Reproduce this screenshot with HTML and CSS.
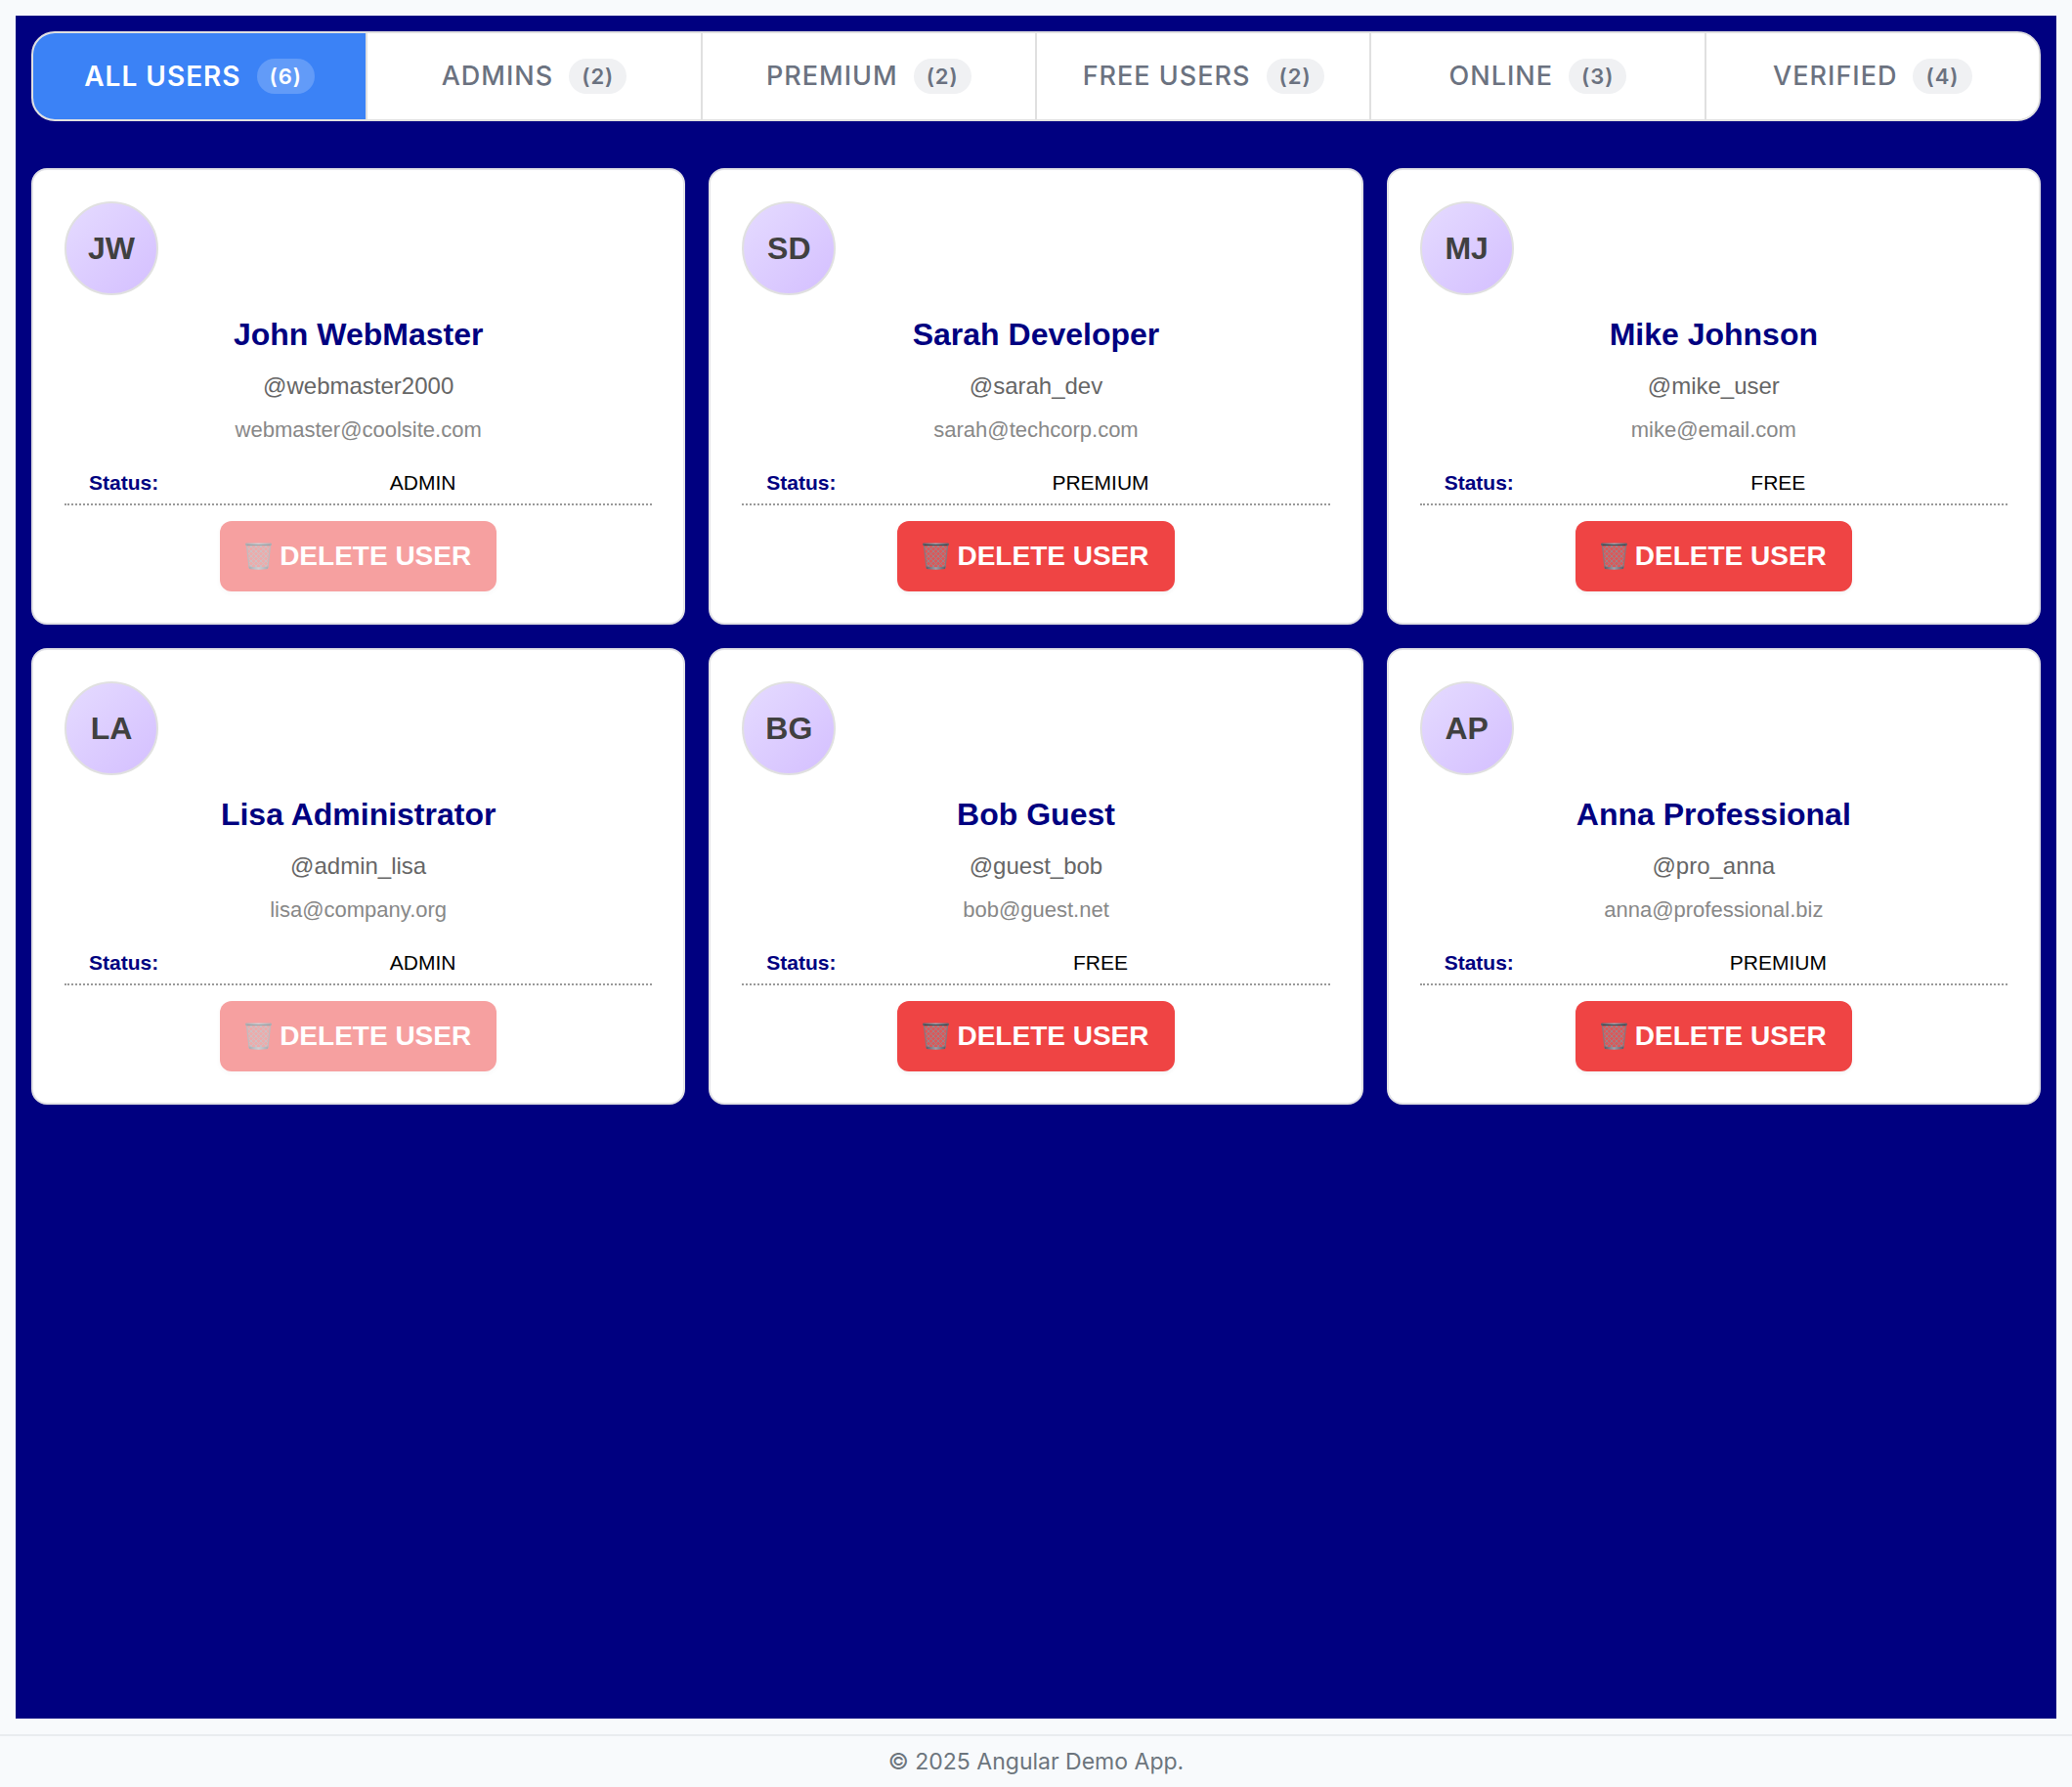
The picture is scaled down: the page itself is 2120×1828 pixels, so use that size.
FILE: index.html
```html
<!DOCTYPE html>
<html lang="en">
<head>
<meta charset="utf-8">
<meta name="viewport" content="width=device-width, initial-scale=1">
<title>Angular Demo App</title>
<link rel="stylesheet" href="styles.css">
</head>
<body>
<svg class="sprite" aria-hidden="true">
  <defs>
    <linearGradient id="metal" x1="0" x2="1" y1="0" y2="0">
      <stop offset="0" stop-color="#5a5d66"/>
      <stop offset="0.5" stop-color="#9aa1ab"/>
      <stop offset="1" stop-color="#5a5d66"/>
    </linearGradient>
    <clipPath id="basket"><path d="M1.500 3H25.500L23 26.500H4Z"/></clipPath>
  </defs>
  <symbol id="trash" viewBox="0 0 27 28">
    <path d="M1.500 3H25.500L23 26.500H4Z" fill="#a98a90" fill-opacity="0.3"/>
    <g clip-path="url(#basket)" stroke="#98878e" stroke-width="0.900" fill="none">
      <path d="M-20 3L4 27M-15 3L9 27M-10 3L14 27M-5 3L19 27M0 3L24 27M5 3L29 27M10 3L34 27M15 3L39 27M20 3L44 27"/>
      <path d="M47 3L23 27M42 3L18 27M37 3L13 27M32 3L8 27M27 3L3 27M22 3L-2 27M17 3L-7 27M12 3L-12 27M7 3L-17 27"/>
    </g>
    <path d="M1.500 3L4 26M25.500 3L23 26" stroke="#85797f" stroke-width="1.200" fill="none"/>
    <path d="M3.600 24.600Q13.500 26 23.400 24.600L23 27Q13.500 28.400 4 27Z" fill="url(#metal)"/>
    <rect x="0" y="0.500" width="27" height="2.800" rx="1.400" fill="url(#metal)"/>
    <path d="M1.500 2.600H25.500" stroke="#3c4046" stroke-width="1"/>
  </symbol>
</svg>
<main class="page">
  <nav class="tabs" aria-label="User filters">
    <button class="tab tab-active" type="button">ALL USERS <span class="count">(6)</span></button>
    <button class="tab" type="button">ADMINS <span class="count">(2)</span></button>
    <button class="tab" type="button">PREMIUM <span class="count">(2)</span></button>
    <button class="tab" type="button">FREE USERS <span class="count">(2)</span></button>
    <button class="tab" type="button">ONLINE <span class="count">(3)</span></button>
    <button class="tab" type="button">VERIFIED <span class="count">(4)</span></button>
  </nav>
  <section class="cards" aria-label="Users">
    <article class="card">
      <div class="avatar">JW</div>
      <h2 class="name">John WebMaster</h2>
      <p class="handle">@webmaster2000</p>
      <p class="email">webmaster@coolsite.com</p>
      <dl class="status"><dt>Status:</dt><dd>ADMIN</dd></dl>
      <button class="delete" type="button" disabled><svg class="icon" aria-hidden="true"><use href="#trash"/></svg>DELETE USER</button>
    </article>
    <article class="card">
      <div class="avatar">SD</div>
      <h2 class="name">Sarah Developer</h2>
      <p class="handle">@sarah_dev</p>
      <p class="email">sarah@techcorp.com</p>
      <dl class="status"><dt>Status:</dt><dd>PREMIUM</dd></dl>
      <button class="delete" type="button"><svg class="icon" aria-hidden="true"><use href="#trash"/></svg>DELETE USER</button>
    </article>
    <article class="card">
      <div class="avatar">MJ</div>
      <h2 class="name">Mike Johnson</h2>
      <p class="handle">@mike_user</p>
      <p class="email">mike@email.com</p>
      <dl class="status"><dt>Status:</dt><dd>FREE</dd></dl>
      <button class="delete" type="button"><svg class="icon" aria-hidden="true"><use href="#trash"/></svg>DELETE USER</button>
    </article>
    <article class="card">
      <div class="avatar">LA</div>
      <h2 class="name">Lisa Administrator</h2>
      <p class="handle">@admin_lisa</p>
      <p class="email">lisa@company.org</p>
      <dl class="status"><dt>Status:</dt><dd>ADMIN</dd></dl>
      <button class="delete" type="button" disabled><svg class="icon" aria-hidden="true"><use href="#trash"/></svg>DELETE USER</button>
    </article>
    <article class="card">
      <div class="avatar">BG</div>
      <h2 class="name">Bob Guest</h2>
      <p class="handle">@guest_bob</p>
      <p class="email">bob@guest.net</p>
      <dl class="status"><dt>Status:</dt><dd>FREE</dd></dl>
      <button class="delete" type="button"><svg class="icon" aria-hidden="true"><use href="#trash"/></svg>DELETE USER</button>
    </article>
    <article class="card">
      <div class="avatar">AP</div>
      <h2 class="name">Anna Professional</h2>
      <p class="handle">@pro_anna</p>
      <p class="email">anna@professional.biz</p>
      <dl class="status"><dt>Status:</dt><dd>PREMIUM</dd></dl>
      <button class="delete" type="button"><svg class="icon" aria-hidden="true"><use href="#trash"/></svg>DELETE USER</button>
    </article>
  </section>
</main>
<footer class="footer">© 2025 Angular Demo App.</footer>
</body>
</html>
```
FILE: styles.css
```css
* {
  box-sizing: border-box;
}

body {
  display: flex;
  flex-direction: column;
  min-height: 100vh;
  margin: 0;
  background: #f8fafc;
  font-family: "Liberation Sans", Arial, sans-serif;
}

.sprite {
  position: absolute;
  width: 0;
  height: 0;
}

.page {
  flex: 1;
  margin: 16px;
  padding: 16px;
  background: #000080;
}

.tabs {
  display: flex;
  margin-bottom: 48px;
  overflow: hidden;
  border: 2px solid #e0e0e0;
  border-radius: 24px;
  background: #fff;
}

.tab {
  display: flex;
  flex: 1;
  align-items: center;
  justify-content: center;
  gap: 16px;
  height: 88px;
  padding: 0 16px;
  border: 0;
  border-right: 2px solid #e0e0e0;
  background: #fff;
  color: #6b7280;
  font: 500 27px/36px Inter, sans-serif;
  letter-spacing: 1px;
}

.tab:last-child {
  border-right: 0;
}

.tab-active {
  background: #3b82f6;
  color: #fff;
  font-size: 28px;
  font-weight: 600;
}

.count {
  padding: 0 13px;
  border-radius: 18px;
  background: #f0f1f3;
  font-size: 22px;
  font-weight: 600;
}

.tab-active .count {
  background: #629bf8;
}

.cards {
  display: grid;
  grid-template-columns: repeat(3, 1fr);
  gap: 24px;
}

.card {
  display: flex;
  flex-direction: column;
  align-items: center;
  padding: 32px;
  border: 2px solid #e2e2e6;
  border-radius: 16px;
  background: #fff;
  text-align: center;
}

.avatar {
  display: flex;
  align-items: center;
  justify-content: center;
  align-self: flex-start;
  width: 96px;
  height: 96px;
  margin-bottom: 20px;
  border: 2px solid #e0e0e0;
  border-radius: 50%;
  background: linear-gradient(135deg, #e5dbff, #d4bfff);
  color: #404040;
  font-size: 32px;
  font-weight: 700;
}

.name {
  margin: 0 0 16px;
  color: #000080;
  font-size: 32px;
  line-height: 40px;
}

.handle {
  margin: 0 0 14px;
  color: #666;
  font-size: 24px;
  line-height: 34px;
}

.email {
  margin: 0 0 18px;
  color: #888;
  font-size: 22px;
  line-height: 28px;
}

.status {
  display: grid;
  grid-template-columns: 132px 1fr;
  align-self: stretch;
  margin: 0 0 16px;
  padding: 8px 0 7px;
  border-bottom: 2px dotted #999;
  font-size: 21px;
  line-height: 28px;
}

.status dt {
  padding-left: 25px;
  color: #000080;
  font-weight: 700;
  text-align: left;
}

.status dd {
  margin: 0;
  color: #000;
}

.delete {
  display: flex;
  align-items: center;
  gap: 8px;
  height: 72px;
  padding: 0 26px;
  border: 0;
  border-radius: 12px;
  background: #ef4444;
  box-shadow: 0 2px 4px rgba(0, 0, 0, 0.05);
  color: #fff;
  font: 700 28px/32px "Liberation Sans", Arial, sans-serif;
}

.delete:disabled {
  opacity: 0.5;
}

.icon {
  width: 27px;
  height: 28px;
}

.footer {
  padding: 10px 16px;
  border-top: 2px solid #e9ecef;
  color: #6c757d;
  font: 400 23px/32px Inter, sans-serif;
  text-align: center;
}
```
